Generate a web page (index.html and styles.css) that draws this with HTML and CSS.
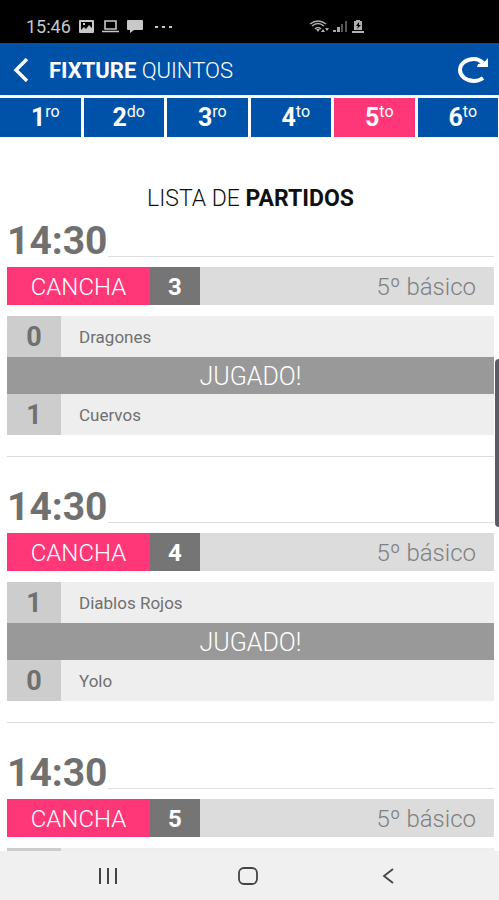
FILE: index.html
```html
<!DOCTYPE html>
<html lang="es">
<head>
  <meta charset="UTF-8">
  <meta name="viewport" content="width=device-width, initial-scale=1.0">
  <title>Fixture Quintos</title>
  <link rel="stylesheet" href="styles.css">
</head>
<body>
  <div class="status">
    <span class="clock">15:46</span>
    <svg width="15" height="13" viewBox="0 0 15 13"><path fill="#c8c8c8" fill-rule="evenodd" d="M1 0h13a1 1 0 0 1 1 1v11a1 1 0 0 1-1 1H1a1 1 0 0 1-1-1V1a1 1 0 0 1 1-1zM2 2v8l3-3 2 2 3-4 3 3V2zM4 3h2v2H4z"/></svg>
    <svg width="17" height="13" viewBox="0 0 17 13"><path fill="none" stroke="#c8c8c8" stroke-width="1.6" d="M3 1h11v8H3zM0 11.5h17"/></svg>
    <svg width="16" height="13" viewBox="0 0 16 13"><path fill="#c8c8c8" d="M1 0h14a1 1 0 0 1 1 1v8a1 1 0 0 1-1 1H7l-4 3v-3H1a1 1 0 0 1-1-1V1a1 1 0 0 1 1-1z"/></svg>
    <svg class="dots" width="18" height="4" viewBox="0 0 18 4"><path fill="#c8c8c8" d="M0 1h3v2H0zM7 1h3v2H7zM14 1h3v2h-3z"/></svg>
    <div class="signals">
      <svg width="20" height="14" viewBox="0 0 20 14"><path fill="none" stroke="#b0b0b0" stroke-width="1.5" d="M1 4q8-6 16 0M3 6q6-5 12 0M6 9q3-3 6 0"/><path fill="#b0b0b0" d="M7 9h4l-2 3zM12 12l2-3 2 3zM16 8h4l-2 3z"/></svg>
      <svg width="15" height="13" viewBox="0 0 15 13"><path fill="#a8a8a8" d="M0 10h3v2H0zM4 7h3v5H4z"/><path fill="#555" d="M8 4h2v8H8zM12 1h2v11h-2z"/></svg>
      <svg width="12" height="14" viewBox="0 0 12 14"><path fill="#b0b0b0" fill-rule="evenodd" d="M4 0h4v1h2v9H2V1h2zM7 2L4 6h2L5 9l4-4H7zM0 11h12v2H0z"/></svg>
    </div>
  </div>

  <header class="header">
    <button class="icon-button" aria-label="Volver">
      <svg width="16" height="24" viewBox="0 0 16 24"><path fill="none" stroke="#fff" stroke-width="3.4" d="M14 1L3 12l11 11"/></svg>
    </button>
    <h1 class="title"><b>FIXTURE</b> QUINTOS</h1>
    <button class="icon-button" aria-label="Actualizar">
      <svg width="30" height="28" viewBox="0 0 30 28"><path fill="none" stroke="#fff" stroke-width="4" d="M25 22Q21 25 16 25C8 25 2 20 2 14S8 3 16 3Q21 3 25 7"/><path fill="#fff" d="M30 2v9H19l1-3 5-1z"/></svg>
    </button>
  </header>

  <nav class="tabs">
    <button class="tab">1<sup>ro</sup></button>
    <button class="tab">2<sup>do</sup></button>
    <button class="tab">3<sup>ro</sup></button>
    <button class="tab">4<sup>to</sup></button>
    <button class="tab active">5<sup>to</sup></button>
    <button class="tab">6<sup>to</sup></button>
  </nav>

  <main class="content">
    <div class="list">
      <h2 class="list-title">LISTA DE <b>PARTIDOS</b></h2>

      <section class="match">
        <h3 class="time">14:30</h3>
        <div class="court">
          <span class="court-label">CANCHA</span>
          <span class="court-number">3</span>
          <span class="level">5º básico</span>
        </div>
        <div class="team"><span class="score">0</span><span class="name">Dragones</span></div>
        <div class="state">JUGADO!</div>
        <div class="team"><span class="score">1</span><span class="name">Cuervos</span></div>
      </section>

      <section class="match">
        <h3 class="time">14:30</h3>
        <div class="court">
          <span class="court-label">CANCHA</span>
          <span class="court-number">4</span>
          <span class="level">5º básico</span>
        </div>
        <div class="team"><span class="score">1</span><span class="name">Diablos Rojos</span></div>
        <div class="state">JUGADO!</div>
        <div class="team"><span class="score">0</span><span class="name">Yolo</span></div>
      </section>

      <section class="match">
        <h3 class="time">14:30</h3>
        <div class="court">
          <span class="court-label">CANCHA</span>
          <span class="court-number">5</span>
          <span class="level">5º básico</span>
        </div>
        <div class="team"><span class="score"></span><span class="name"></span></div>
      </section>
    </div>
    <div class="edge-handle"></div>
  </main>

  <footer class="navbar">
    <button class="nav-button" aria-label="Recientes">
      <svg width="18" height="16" viewBox="0 0 18 16"><path fill="none" stroke="#444" stroke-width="2" d="M1 0v16M9 0v16M17 0v16"/></svg>
    </button>
    <button class="nav-button" aria-label="Inicio">
      <svg width="20" height="18" viewBox="0 0 20 18"><rect x="1" y="1" width="18" height="16" rx="5" fill="none" stroke="#444" stroke-width="1.8"/></svg>
    </button>
    <button class="nav-button" aria-label="Atrás">
      <svg width="12" height="16" viewBox="0 0 12 16"><path fill="none" stroke="#444" stroke-width="1.8" d="M11 1L2 8l9 7"/></svg>
    </button>
  </footer>
</body>
</html>
```

FILE: styles.css
```css
* {
  box-sizing: border-box;
}

body {
  display: flex;
  flex-direction: column;
  height: 100vh;
  margin: 0;
  background: #fff;
  font-family: Roboto, "Liberation Sans", sans-serif;
}

button {
  margin: 0;
  padding: 0;
  border: none;
  background: none;
  color: inherit;
  font-family: inherit;
  cursor: pointer;
}

svg {
  display: block;
}

h1, h2, h3 {
  margin: 0;
}

.status {
  display: grid;
  grid-template-columns: repeat(5, auto) 1fr;
  align-items: center;
  gap: 8px;
  height: 43px;
  padding: 10px 26px 0;
  background: #000;
  color: #c8c8c8;
}

.clock {
  font-size: 18px;
}

.dots {
  margin-left: 4px;
}

.signals {
  display: flex;
  align-items: center;
  justify-content: center;
  gap: 4px;
  padding-left: 20px;
}

.header {
  display: flex;
  align-items: center;
  height: 52px;
  padding: 2px 11px 0 13px;
  background: #0052a9;
  color: #fff;
}

.title {
  flex: 1;
  margin-left: 20px;
  font-size: 22px;
  font-weight: 300;
}

.title b {
  font-weight: 700;
}

.tabs {
  display: grid;
  grid-template-columns: repeat(6, 1fr);
  gap: 3px;
  padding: 3px 1px 0 0;
}

.tab {
  height: 39px;
  padding-left: 10px;
  background: #0052a9;
  color: #fff;
  font-size: 25px;
  font-weight: 700;
}

.tab sup {
  font-size: 16px;
  font-weight: 400;
  line-height: 1;
}

.tab.active {
  background: #ff3779;
}

.content {
  position: relative;
  flex: 1;
  min-height: 0;
}

.list {
  height: 100%;
  padding: 49px 5px 0 7px;
  overflow: hidden;
}

.list-title {
  margin-bottom: 11px;
  color: #111;
  font-size: 23px;
  font-weight: 300;
  line-height: 26px;
  text-align: center;
}

.list-title b {
  font-weight: 700;
}

.match {
  margin-bottom: 32px;
  padding-bottom: 21px;
  border-bottom: 1px solid #ddd;
}

.time {
  display: flex;
  align-items: flex-end;
  height: 34px;
  margin-bottom: 10px;
  color: #707070;
  font-size: 39px;
  font-weight: 700;
  line-height: 32px;
}

.time::after {
  content: "";
  flex: 1;
  border-bottom: 1px solid #ddd;
}

.court {
  display: flex;
  height: 38px;
  margin-bottom: 11px;
  background: #dcdcdc;
  line-height: 40px;
}

.court-label {
  width: 143px;
  background: #ff3779;
  color: #fff;
  font-size: 24px;
  font-weight: 300;
  text-align: center;
}

.court-number {
  width: 50px;
  background: #757575;
  color: #fff;
  font-size: 24px;
  font-weight: 700;
  text-align: center;
}

.level {
  flex: 1;
  padding-right: 18px;
  color: #808080;
  font-size: 24px;
  font-weight: 300;
  text-align: right;
}

.team {
  display: flex;
  height: 41px;
  background: #eee;
  line-height: 42px;
}

.score {
  width: 54px;
  background: #cdcdcd;
  color: #707070;
  font-size: 27px;
  font-weight: 700;
  text-align: center;
}

.name {
  padding-left: 18px;
  color: #707070;
  font-size: 17px;
}

.state {
  height: 37px;
  background: #999;
  color: #fff;
  font-size: 25px;
  font-weight: 300;
  line-height: 40px;
  text-align: center;
}

.edge-handle {
  position: absolute;
  top: 222px;
  right: 0;
  width: 4px;
  height: 168px;
  border-radius: 4px 0 0 4px;
  background: #5c5a66;
}

.navbar {
  display: grid;
  grid-template-columns: repeat(3, 140px);
  justify-content: center;
  height: 49px;
  padding-right: 3px;
  background: #f0f0f0;
}

.nav-button {
  display: flex;
  align-items: center;
  justify-content: center;
}
```
